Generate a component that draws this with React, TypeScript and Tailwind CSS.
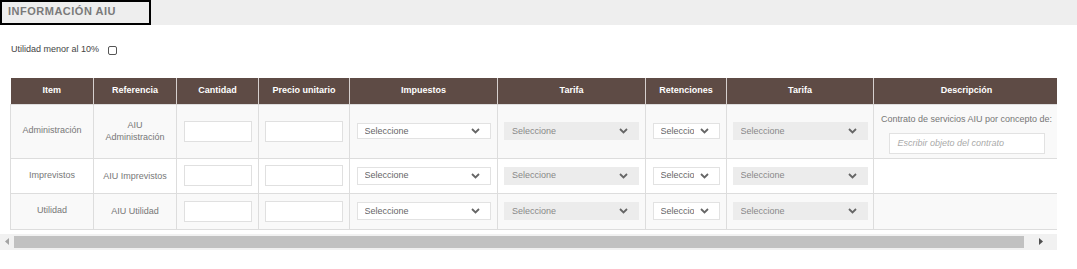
import React from "react";

const Chevron = ({ color = "#666" }: { color?: string }) => (
  <svg width="9" height="6" viewBox="0 0 9 6" className="shrink-0">
    <path d="M1 1 L4.5 4.5 L8 1" fill="none" stroke={color} strokeWidth="1.8" />
  </svg>
);

const Sel = ({
  w,
  disabled,
  textW,
  h = 16,
}: {
  w: string;
  disabled?: boolean;
  textW?: string;
  h?: number;
}) => (
  <div
    className={`${w} ${
      disabled
        ? "bg-[#ececec] border-[#ececec] text-[#888]"
        : "bg-white border-[#e2e2e2] text-[#666]"
    } border flex items-center justify-between pl-[7px] pr-[10px] mx-auto`}
    style={{ height: h }}
  >
    <span className={`${textW ?? ""} overflow-hidden whitespace-nowrap text-[9px] leading-[11px]`}>
      Seleccione
    </span>
    <Chevron />
  </div>
);

const Inp = ({ w }: { w: string }) => (
  <div className={`${w} h-[21px] bg-white border border-[#e0e0e0] mx-auto`} />
);

type Row = {
  item: string;
  ref: React.ReactNode;
  h: string;
  bg: string;
  desc?: boolean;
};

const rows: Row[] = [
  {
    item: "Administración",
    ref: (
      <>
        AIU
        <br />
        Administración
      </>
    ),
    h: "h-[54px]",
    bg: "bg-[#f9f9f9]",
    desc: true,
  },
  { item: "Imprevistos", ref: "AIU Imprevistos", h: "h-[35px]", bg: "bg-white" },
  { item: "Utilidad", ref: "AIU Utilidad", h: "h-[36px]", bg: "bg-[#f9f9f9]" },
];

const headers = [
  "Item",
  "Referencia",
  "Cantidad",
  "Precio unitario",
  "Impuestos",
  "Tarifa",
  "Retenciones",
  "Tarifa",
  "Descripción",
];
const widths = [83, 83, 82, 91, 148, 148, 81, 147, 186];

export default function App() {
  return (
    <div className="w-[1077px] h-[269px] bg-white font-['Liberation_Sans',Arial,sans-serif] overflow-hidden">
      <div className="h-[25px] bg-[#eeeeee] flex">
        <div className="w-[151px] h-[25px] border-2 border-black flex items-center pl-[6px] pb-[2px] text-[11px] font-bold text-[#7a7a7a] tracking-[0.5px]">
          INFORMACIÓN AIU
        </div>
      </div>
      <div className="mt-[19px] pl-[11px] flex items-center h-[12px] text-[9px] text-[#444]">
        <span>Utilidad menor al 10%</span>
        <span className="ml-[9px] w-[9px] h-[9px] border border-[#555] rounded-[2px] bg-white" />
      </div>
      <div className="mt-[22px] w-[1057px] overflow-hidden pl-[10px]">
        <table
          className="border-collapse table-fixed text-[9px] text-[#777]"
          style={{ width: widths.reduce((a, b) => a + b, 0) }}
        >
          <colgroup>
            {widths.map((w, i) => (
              <col key={i} style={{ width: w }} />
            ))}
          </colgroup>
          <thead>
            <tr className="h-[26px] bg-[#5e4b45]">
              {headers.map((h, i) => (
                <th
                  key={i}
                  className="text-white font-bold text-[9px] text-center border-x border-[#d6d0ce] first:border-l-0 p-0"
                >
                  {h}
                </th>
              ))}
            </tr>
          </thead>
          <tbody>
            {rows.map((r, i) => (
              <tr key={i} className={`${r.h} ${r.bg}`}>
                <td className="border border-[#dddddd] text-center p-0">{r.item}</td>
                <td className="border border-[#dddddd] text-center p-0 leading-[12px]">{r.ref}</td>
                <td className="border border-[#dddddd] p-0">
                  <Inp w="w-[68px]" />
                </td>
                <td className="border border-[#dddddd] p-0">
                  <Inp w="w-[78px]" />
                </td>
                <td className="border border-[#dddddd] p-0">
                  <Sel w="w-[134px]" h={i === 0 ? 16 : 18} />
                </td>
                <td className="border border-[#dddddd] p-0">
                  <Sel w="w-[135px]" disabled h={18} />
                </td>
                <td className="border border-[#dddddd] p-0">
                  <Sel w="w-[67px]" textW="w-[33px]" h={i === 0 ? 16 : 18} />
                </td>
                <td className="border border-[#dddddd] p-0">
                  <Sel w="w-[135px]" disabled h={18} />
                </td>
                <td className="border border-[#dddddd] p-0 align-top">
                  {r.desc && (
                    <div className="flex flex-col items-center pt-[8px]">
                      <div className="text-[9px] text-[#777] whitespace-nowrap">
                        Contrato de servicios AIU por concepto de:
                      </div>
                      <div className="mt-[7px] w-[156px] h-[21px] border border-[#e2e2e2] bg-white flex items-center pl-[8px] text-[9px] italic text-[#aaa]">
                        Escribir objeto del contrato
                      </div>
                    </div>
                  )}
                </td>
              </tr>
            ))}
          </tbody>
        </table>
      </div>
      <div className="mt-[4px] w-[1057px] h-[16px] bg-[#f1f1f1] flex items-center">
        <div className="w-[14px] flex justify-center">
          <svg width="4" height="7" viewBox="0 0 4 7">
            <path d="M4 0 L0 3.5 L4 7 Z" fill="#a3a3a3" />
          </svg>
        </div>
        <div className="w-[1010px] h-[12px] bg-[#c1c1c1]" />
        <div className="flex-1 flex justify-center">
          <svg width="4" height="7" viewBox="0 0 4 7">
            <path d="M0 0 L4 3.5 L0 7 Z" fill="#505050" />
          </svg>
        </div>
      </div>
    </div>
  );
}
